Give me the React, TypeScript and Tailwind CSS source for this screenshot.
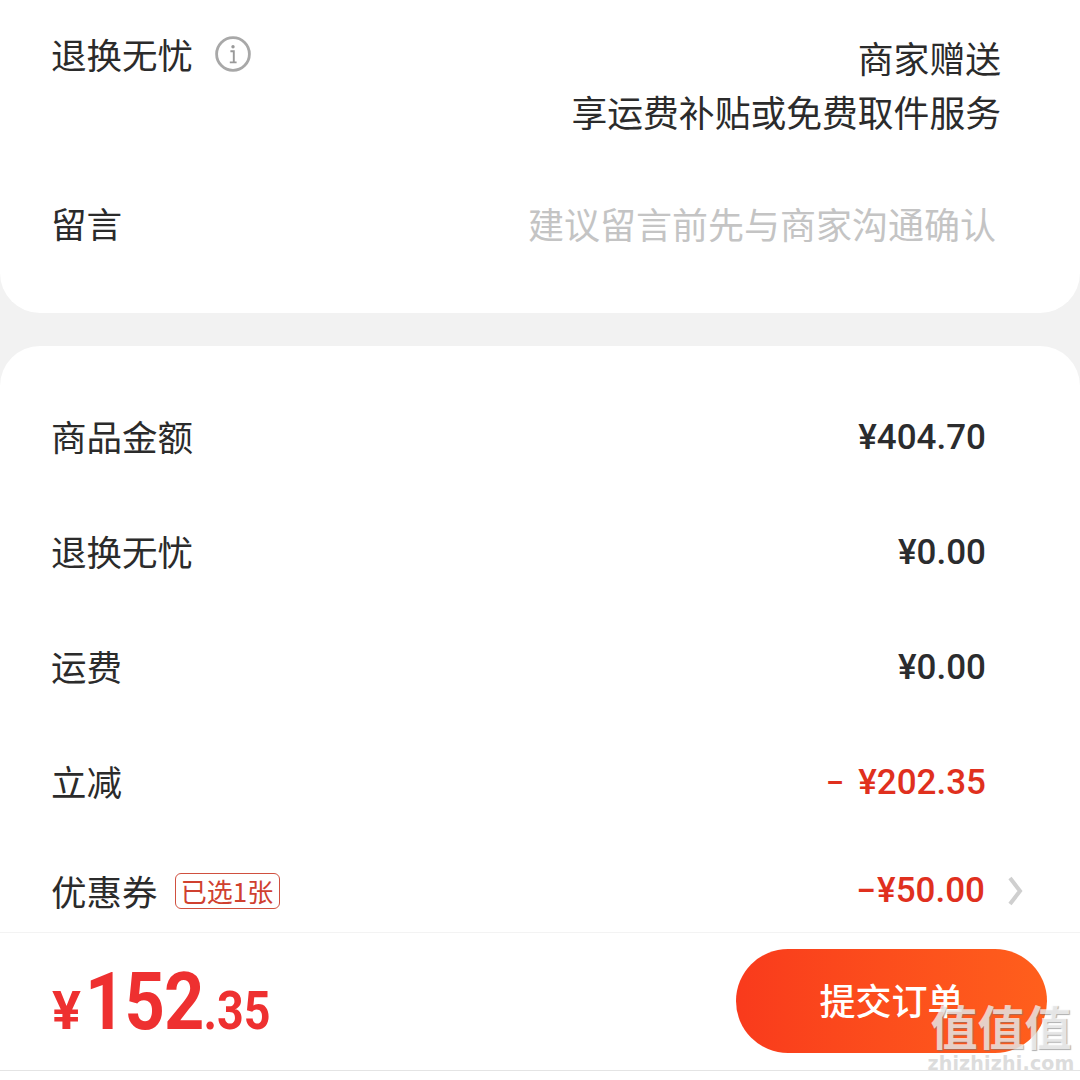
const cjk = "font-['Noto_Sans_CJK_SC','Noto_Sans',sans-serif]";

function InfoIcon() {
  return (
    <svg width="36" height="36" viewBox="0 0 36 36" fill="none">
      <circle cx="18" cy="18" r="16.4" stroke="#a8a8a8" strokeWidth="2.8" />
      <circle cx="18" cy="10.8" r="1.7" fill="#999" />
      <path d="M15.4 15.2h3.4v11M14.8 26.4h6.8" stroke="#999" strokeWidth="1.9" />
    </svg>
  );
}

function Row({ label, amount, minus }: { label: string; amount: string; minus?: boolean }) {
  return (
    <div className="flex h-[115px] items-center justify-between pl-[51px] pr-[94px]">
      <span className="pb-[4px] text-[35.5px] leading-[50px] text-[#2b2b2b]">{label}</span>
      <span
        className={`flex items-center font-['Roboto',sans-serif] text-[35px] leading-[50px] font-medium ${minus ? 'text-[#e0301e]' : 'text-[#2b2c2e]'}`}
      >
        {minus && <span className="mr-[15px] text-[27px] font-bold">–</span>}
        {amount}
      </span>
    </div>
  );
}

export default function App() {
  return (
    <div className={`${cjk} relative flex h-[1080px] w-[1080px] flex-col overflow-hidden bg-[#f2f2f2]`}>
      {/* top card */}
      <div className="h-[313px] shrink-0 rounded-b-[40px] bg-white">
        <div className="flex items-start justify-between pt-[30px] pl-[51px] pr-[79px]">
          <div className="mt-[1px] flex items-center gap-[22px]">
            <span className="text-[35.5px] leading-[46px] text-[#2b2b2b]">退换无忧</span>
            <InfoIcon />
          </div>
          <div className="text-right text-[35.8px] leading-[54px] text-[#2b2b2b]">
            <div>商家赠送</div>
            <div>享运费补贴或免费取件服务</div>
          </div>
        </div>
        <div className="mt-[60px] flex items-center justify-between pl-[51px] pr-[84px]">
          <span className="text-[35.5px] leading-[50px] text-[#2b2b2b]">留言</span>
          <span className="text-[36px] leading-[50px] text-[#c4c4c4]">建议留言前先与商家沟通确认</span>
        </div>
      </div>

      {/* price details */}
      <div className="mt-[33px] flex flex-1 flex-col rounded-t-[40px] bg-white pt-[34px]">
        <Row label="商品金额" amount="¥404.70" />
        <Row label="退换无忧" amount="¥0.00" />
        <Row label="运费" amount="¥0.00" />
        <Row label="立减" amount="¥202.35" minus />
        <div className="flex h-[92px] items-start justify-between pt-[26px] pl-[51px] pr-[57px]">
          <div className="flex items-center gap-[17px]">
            <span className="text-[35.5px] leading-[50px] text-[#2b2b2b]">优惠券</span>
            <span className="flex h-[36px] w-[105px] items-center justify-center rounded-[6px] border border-[#d0503f] text-[26px] leading-none text-[#d0402f]">
              已选1张
            </span>
          </div>
          <div className="flex items-center gap-[22px]">
            <span className="flex items-center font-['Roboto',sans-serif] text-[35px] leading-[50px] font-medium text-[#e0301e]">
              <span className="mr-[2px] text-[29px] font-bold">–</span>
              ¥50.00
            </span>
            <svg width="16" height="30" viewBox="0 0 16 30" fill="none">
              <path d="M3 2l10 13L3 28" stroke="#cfcfcf" strokeWidth="4" />
            </svg>
          </div>
        </div>

        {/* bottom bar */}
        <div className="flex h-[139px] shrink-0 items-center justify-between border-y border-t-[#f3f3f3] border-b-[#e4e4e4] pl-[52px] pr-[33px]">
          <div className="flex items-baseline font-['Roboto',sans-serif] font-bold text-[#ee3030]">
            <span className="mr-[4px] text-[54px] leading-none">¥</span>
            <span className="flex origin-left scale-x-[0.88] items-baseline">
              <span className="text-[80px] leading-none tracking-[-1px]">152</span>
              <span className="text-[53px] leading-none">.35</span>
            </span>
          </div>
          <button className="mb-[2px] h-[104px] w-[311px] rounded-full bg-gradient-to-r from-[#f93a1c] to-[#ff5f1c] pb-[3px] text-[36px] font-medium text-white">
            提交订单
          </button>
        </div>
        <div className="h-[9px] bg-white" />
      </div>

      {/* watermark */}
      <div className="absolute right-[8px] bottom-[6px] flex w-[142px] flex-col items-center">
        <span className="text-[47px] leading-[54px] font-bold whitespace-nowrap text-white/70 [text-shadow:1px_1px_1px_rgba(120,120,120,0.6)]">
          值值值
        </span>
        <span className="font-['DejaVu_Sans',sans-serif] text-[19px] leading-[22px] font-bold tracking-[0.2px] text-[#dcdcdc]">
          zhizhizhi.com
        </span>
      </div>
    </div>
  );
}
